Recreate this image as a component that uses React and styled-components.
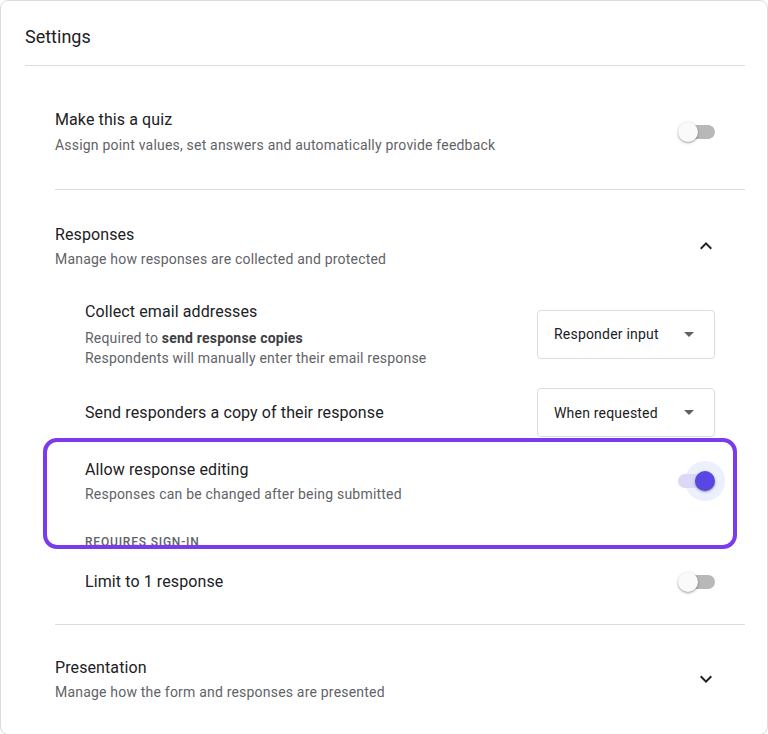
import React from 'react'
import styled, { createGlobalStyle } from 'styled-components'

const GlobalStyle = createGlobalStyle`
  * {
    box-sizing: border-box;
  }
  body {
    margin: 0;
    background: #fff;
    font-family: Roboto, "Noto Sans", Arial, sans-serif;
    color: #202124;
  }
`

const Card = styled.div`
  width: 768px;
  border: 1px solid #dadce0;
  border-radius: 8px;
  background: #fff;
  padding: 0 22px 0 24px;
`

const Header = styled.div`
  padding: 24px 0 16px;
  border-bottom: 1px solid #dadce0;
  font-size: 18px;
  line-height: 24px;
`

const Body = styled.div`
  padding-left: 30px;
`

const Section = styled.section`
  padding: ${(p) => p.$top}px 30px ${(p) => p.$bottom}px 0;
  border-bottom: ${(p) => (p.$last ? 'none' : '1px solid #dadce0')};
`

const Row = styled.div`
  display: flex;
  align-items: center;
  justify-content: space-between;
  gap: 24px;
`

const Title = styled.div`
  font-size: 16px;
  line-height: 24px;
  letter-spacing: 0.1px;
  color: #202124;
`

const Sub = styled.div`
  margin-top: ${(p) => p.$gap ?? 3}px;
  font-size: 14px;
  line-height: 20px;
  letter-spacing: 0.2px;
  color: #5f6368;

  b {
    font-weight: 700;
    color: #3c4043;
  }
`

const Items = styled.div`
  display: flex;
  flex-direction: column;
  gap: 20px;
  margin-top: 31px;
  padding-left: 30px;
`

const Select = styled.div`
  flex: none;
  width: 178px;
  height: 49px;
  border: 1px solid #dadce0;
  border-radius: 4px;
  display: flex;
  align-items: center;
  justify-content: space-between;
  padding: 0 20px 0 16px;
  font-size: 14px;
  letter-spacing: 0.2px;
  color: #202124;
`

const Caret = styled.span`
  width: 0;
  height: 0;
  border-left: 5px solid transparent;
  border-right: 5px solid transparent;
  border-top: 5px solid #5f6368;
`

const Highlight = styled.div`
  position: relative;
  margin-top: 1px;

  &::after {
    content: '';
    position: absolute;
    top: -20px;
    left: -42px;
    right: -22px;
    bottom: 1px;
    border: 4px solid #7c3aed;
    border-radius: 14px;
    pointer-events: none;
  }
`

const Overline = styled.div`
  margin-top: 30px;
  font-size: 12px;
  line-height: 16px;
  font-weight: 500;
  letter-spacing: 0.8px;
  text-transform: uppercase;
  color: #5f6368;
`

const SwitchWrap = styled.div`
  position: relative;
  flex: none;
  width: 37px;
  height: 20px;
`

const Track = styled.span`
  position: absolute;
  top: 3px;
  left: ${(p) => (p.$on ? 0 : 3)}px;
  width: 34px;
  height: 14px;
  border-radius: 7px;
  background: ${(p) => (p.$on ? '#dcd8f7' : '#b8b8b8')};
`

const Halo = styled.span`
  position: absolute;
  top: -10px;
  left: 7px;
  width: 40px;
  height: 40px;
  border-radius: 50%;
  background: #ecf0fd;
`

const Thumb = styled.span`
  position: absolute;
  top: 0;
  left: ${(p) => (p.$on ? 17 : 0)}px;
  width: 20px;
  height: 20px;
  border-radius: 50%;
  background: ${(p) => (p.$on ? '#5847e3' : '#fafafa')};
  box-shadow: 0 1px 3px rgba(0, 0, 0, 0.3), 0 1px 1px rgba(0, 0, 0, 0.12);
`

const Chevron = styled.svg`
  flex: none;
  width: 24px;
  height: 24px;
  margin-right: -3px;
  fill: #202124;
`

function Switch({ on }) {
  return (
    <SwitchWrap>
      {on && <Halo />}
      <Track $on={on} />
      <Thumb $on={on} />
    </SwitchWrap>
  )
}

function Expand({ open }) {
  return (
    <Chevron viewBox="0 0 24 24">
      {open ? (
        <path d="M12 8l-6 6 1.41 1.41L12 10.83l4.59 4.58L18 14z" />
      ) : (
        <path d="M16.59 8.59 12 13.17 7.41 8.59 6 10l6 6 6-6z" />
      )}
    </Chevron>
  )
}

export default function App() {
  return (
    <>
      <GlobalStyle />
      <Card>
        <Header>Settings</Header>
        <Body>
          <Section $top={42} $bottom={34}>
            <Row>
              <div>
                <Title>Make this a quiz</Title>
                <Sub>Assign point values, set answers and automatically provide feedback</Sub>
              </div>
              <Switch />
            </Row>
          </Section>

          <Section $top={33} $bottom={30}>
            <Row>
              <div>
                <Title>Responses</Title>
                <Sub $gap={2}>Manage how responses are collected and protected</Sub>
              </div>
              <Expand open />
            </Row>
            <Items>
              <Row>
                <div>
                  <Title>Collect email addresses</Title>
                  <Sub $gap={4}>
                    Required to <b>send response copies</b>
                    <br />
                    Respondents will manually enter their email response
                  </Sub>
                </div>
                <Select>
                  Responder input
                  <Caret />
                </Select>
              </Row>
              <Row>
                <Title>Send responders a copy of their response</Title>
                <Select>
                  When requested
                  <Caret />
                </Select>
              </Row>
              <Highlight>
                <Row>
                  <div>
                    <Title>Allow response editing</Title>
                    <Sub $gap={2}>Responses can be changed after being submitted</Sub>
                  </div>
                  <Switch on />
                </Row>
                <Overline>Requires sign-in</Overline>
              </Highlight>
              <Row>
                <Title>Limit to 1 response</Title>
                <Switch />
              </Row>
            </Items>
          </Section>

          <Section $top={31} $bottom={32} $last>
            <Row>
              <div>
                <Title>Presentation</Title>
                <Sub $gap={2}>Manage how the form and responses are presented</Sub>
              </div>
              <Expand />
            </Row>
          </Section>
        </Body>
      </Card>
    </>
  )
}
